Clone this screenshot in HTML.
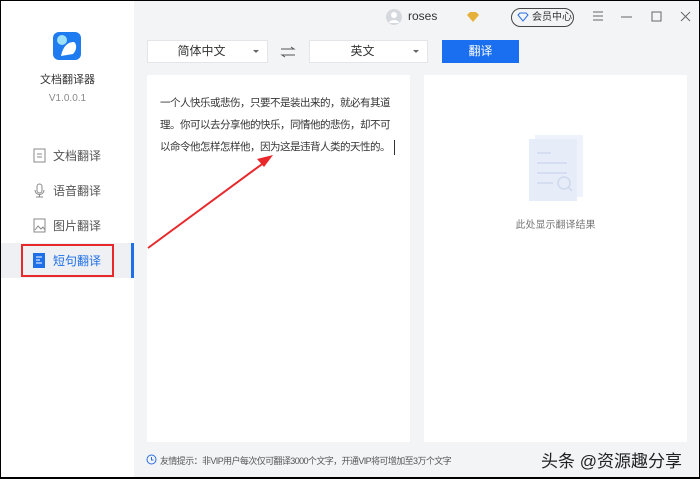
<!DOCTYPE html>
<html><head><meta charset="utf-8"><style>
*{margin:0;padding:0;box-sizing:border-box}
body{width:700px;height:479px;overflow:hidden;font-family:"Liberation Sans","Noto Sans CJK SC",sans-serif;background:#000;position:relative}
#app{position:absolute;left:1px;top:1px;width:698px;height:476px;background:#f3f4f6;overflow:hidden}
.side{position:absolute;left:0;top:0;width:133px;height:476px;background:#fff}
.abs{position:absolute}
.nav{position:absolute;left:32px;font-size:12px;color:#555;display:flex;align-items:center}
.nav svg{margin-right:7px}
.sel{position:absolute;top:39px;height:23px;background:#fff;border:1px solid #e3e5e9;font-size:12px;color:#333;text-align:center;line-height:21px}
.sel:after{content:"";position:absolute;right:8px;top:9px;border:3px solid transparent;border-top:3px solid #666}
.panel{position:absolute;top:74px;height:367px;background:#fff}
</style></head><body><div id="app">
<div class="side">
 <div class="abs" style="left:52px;top:31px;width:28px;height:28px;border-radius:6px;background:#1f7cf0"></div>
 <svg class="abs" style="left:52px;top:31px" width="28" height="28"><circle cx="9" cy="8" r="5" fill="#9ee0f5"/><path d="M8 24 C10 14 15 10 21 10 C24 12 24 18 20 22 Z" fill="#fff"/></svg>
 <div class="abs" style="left:0;width:133px;top:70px;text-align:center;font-size:11px;color:#333">文档翻译器</div>
 <div class="abs" style="left:0;width:133px;top:92px;text-align:center;font-size:10px;color:#888">V1.0.0.1</div>
 <div class="nav" style="top:146px"><svg width="13" height="15"><rect x="1" y="1" width="11" height="13" fill="none" stroke="#888"/><path d="M4 6h5M4 9h5" stroke="#888"/></svg>文档翻译</div>
 <div class="nav" style="top:181px"><svg width="13" height="15"><rect x="4" y="1" width="5" height="9" rx="2.5" fill="none" stroke="#888"/><path d="M2 7a4.5 4.5 0 0 0 9 0M6.5 11v3M3 14h7" fill="none" stroke="#888"/></svg>语音翻译</div>
 <div class="nav" style="top:216px"><svg width="13" height="15"><rect x="1" y="1" width="11" height="13" fill="none" stroke="#888"/><path d="M2 12l3-4 3 3 2-2 2 3" fill="none" stroke="#888"/></svg>图片翻译</div>
 <div class="abs" style="left:0;top:242px;width:133px;height:35px;background:#eef0f3"></div>
 <div class="abs" style="left:130px;top:242px;width:3px;height:35px;background:#1f6fe8"></div>
 <div class="abs" style="left:20px;top:243px;width:93px;height:33px;border:2px solid #e8282b"></div>
 <div class="nav" style="top:251px;color:#1f6fe8"><svg width="13" height="15"><rect x="0" y="0" width="12" height="15" fill="#1f6fe8"/><path d="M3 4h6M3 7h4M3 10h6" stroke="#fff"/></svg>短句翻译</div>
</div>
<svg class="abs" style="left:384px;top:7px" width="18" height="18"><circle cx="9" cy="9" r="8" fill="#d5d8dc"/><circle cx="9" cy="7" r="3" fill="#fff"/><path d="M3.5 15a6 5 0 0 1 11 0" fill="#fff"/></svg>
<div class="abs" style="left:407px;top:8px;font-size:12px;color:#333">roses</div>
<svg class="abs" style="left:465px;top:10px" width="14" height="12"><path d="M1 4l3-3h6l3 3-6 7z" fill="#e6b13a"/></svg>
<div class="abs" style="left:510px;top:7px;width:63px;height:19px;border:1px solid #444;border-radius:10px;font-size:10px;color:#333;line-height:17px;padding-left:20px">会员中心</div>
<svg class="abs" style="left:516px;top:11px" width="12" height="10"><path d="M1 3l2-2h6l2 2-5 6z" fill="none" stroke="#2a6de0"/></svg>
<svg class="abs" style="left:590px;top:9px" width="110" height="14"><path d="M2 2h10M2 6h10M2 10h10" stroke="#666"/><path d="M30 7h11" stroke="#666"/><rect x="61" y="2" width="9" height="9" fill="none" stroke="#666"/><path d="M90 2l9 9M99 2l-9 9" stroke="#666"/></svg>
<div class="sel" style="left:146px;width:121px;padding-right:12px">简体中文</div>
<svg class="abs" style="left:279px;top:45px" width="16" height="12"><path d="M1 3h13l-3-2M15 9H2l3 2" fill="none" stroke="#555"/></svg>
<div class="sel" style="left:308px;width:119px;padding-right:12px">英文</div>
<div class="abs" style="left:441px;top:39px;width:77px;height:23px;background:#1a6ef0;color:#fff;font-size:12px;text-align:center;line-height:23px">翻译</div>
<div class="panel" style="left:146px;width:263px"></div>
<div class="panel" style="left:423px;width:263px"></div>
<div class="abs" style="left:159px;top:91px;font-size:10.5px;letter-spacing:-0.5px;line-height:22px;color:#333;white-space:nowrap">一个人快乐或悲伤，只要不是装出来的，就必有其道<br>理。你可以去分享他的快乐，同情他的悲伤，却不可<br>以命令他怎样怎样他，因为这是违背人类的天性的。<span style="display:inline-block;width:1px;height:15px;background:#333;vertical-align:middle;margin-left:4px"></span></div>
<svg class="abs" style="left:528px;top:132px" width="62" height="72"><rect x="6" y="2" width="48" height="62" fill="#eef3fb"/><rect x="0" y="6" width="48" height="62" fill="#e6edf9"/><path d="M8 20h14M8 30h30M8 40h30M8 50h16" stroke="#d4def0" stroke-width="2"/><circle cx="35" cy="50" r="6" fill="none" stroke="#cfd9ec" stroke-width="1.5"/><path d="M39 54l4 4" stroke="#cfd9ec" stroke-width="1.5"/></svg>
<div class="abs" style="left:423px;width:263px;top:215px;text-align:center;font-size:10px;color:#777">此处显示翻译结果</div>
<svg class="abs" style="left:145px;top:453px" width="11" height="11"><circle cx="5.5" cy="5.5" r="4.5" fill="none" stroke="#2a6de0"/><path d="M5.5 3v3h2" fill="none" stroke="#2a6de0"/></svg>
<div class="abs" style="left:159px;top:453px;font-size:9px;letter-spacing:-0.6px;color:#555;white-space:nowrap">友情提示：非VIP用户每次仅可翻译3000个文字，开通VIP将可增加至3万个文字</div>
<div class="abs" style="left:540px;top:446px;font-size:17px;color:#222;white-space:nowrap">头条 @资源趣分享</div>
<svg class="abs" style="left:0;top:0" width="698" height="476"><path d="M147 247L268 158" stroke="#e8282b" stroke-width="2"/><path d="M272 154l-16 4 7 8z" fill="#e8282b"/></svg>
</div></body></html>
